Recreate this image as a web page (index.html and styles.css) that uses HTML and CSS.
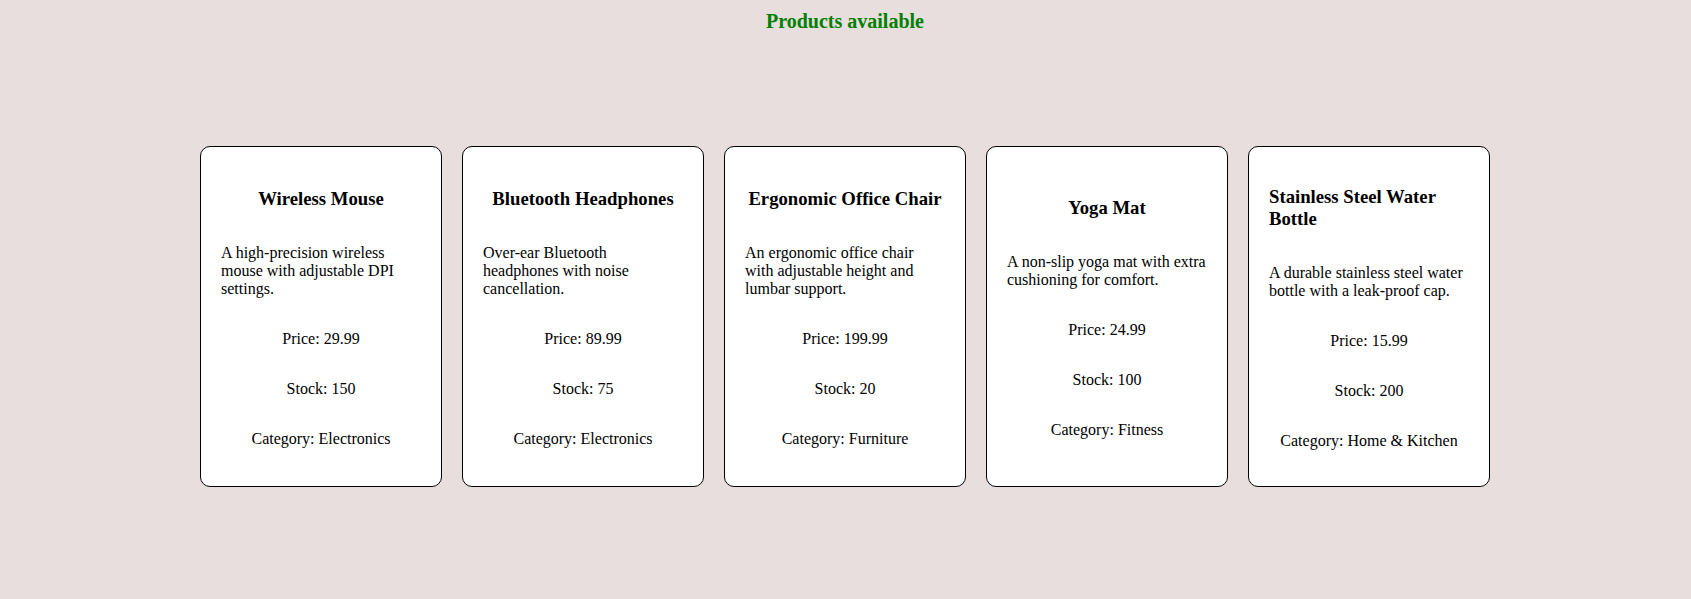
FILE: index.html
```html
<!DOCTYPE html>
<html lang="en">
<head>
<meta charset="utf-8">
<title>Products available</title>
<link rel="stylesheet" href="styles.css">
</head>
<body>
  <h2 class="page-title">Products available</h2>
  <div class="product-list">
    <div class="card">
      <h3 class="card-title">Wireless Mouse</h3>
      <p class="card-desc">A high-precision wireless mouse with adjustable DPI settings.</p>
      <p class="card-meta">Price: 29.99</p>
      <p class="card-meta">Stock: 150</p>
      <p class="card-meta">Category: Electronics</p>
    </div>
    <div class="card">
      <h3 class="card-title">Bluetooth Headphones</h3>
      <p class="card-desc">Over-ear Bluetooth headphones with noise cancellation.</p>
      <p class="card-meta">Price: 89.99</p>
      <p class="card-meta">Stock: 75</p>
      <p class="card-meta">Category: Electronics</p>
    </div>
    <div class="card">
      <h3 class="card-title">Ergonomic Office Chair</h3>
      <p class="card-desc">An ergonomic office chair with adjustable height and lumbar support.</p>
      <p class="card-meta">Price: 199.99</p>
      <p class="card-meta">Stock: 20</p>
      <p class="card-meta">Category: Furniture</p>
    </div>
    <div class="card">
      <h3 class="card-title">Yoga Mat</h3>
      <p class="card-desc">A non-slip yoga mat with extra cushioning for comfort.</p>
      <p class="card-meta">Price: 24.99</p>
      <p class="card-meta">Stock: 100</p>
      <p class="card-meta">Category: Fitness</p>
    </div>
    <div class="card">
      <h3 class="card-title">Stainless Steel Water Bottle</h3>
      <p class="card-desc">A durable stainless steel water bottle with a leak-proof cap.</p>
      <p class="card-meta">Price: 15.99</p>
      <p class="card-meta">Stock: 200</p>
      <p class="card-meta">Category: Home &amp; Kitchen</p>
    </div>
  </div>
</body>
</html>
```

FILE: styles.css
```css
html, body {
  background: #e8dede;
}
body {
  margin: 0;
  padding: 10px 8px 0 7px;
  font-family: "Liberation Serif", "Times New Roman", serif;
  font-size: 16px;
  color: #000;
}
.page-title {
  margin: 0;
  font-size: 20px;
  line-height: 23px;
  font-weight: bold;
  color: green;
  text-align: center;
}
.product-list {
  display: flex;
  justify-content: center;
  gap: 20px;
  margin-top: 113px;
}
.card {
  width: 200px;
  padding: 20px;
  background: #fff;
  border: 1px solid #000;
  border-radius: 10px;
  display: flex;
  flex-direction: column;
  align-items: center;
  justify-content: center;
}
.card-title {
  font-size: 18.72px;
  margin: 18.72px 0;
}
.card-desc {
  margin: 16px 0;
}
.card-meta {
  margin: 16px 0;
}
```
